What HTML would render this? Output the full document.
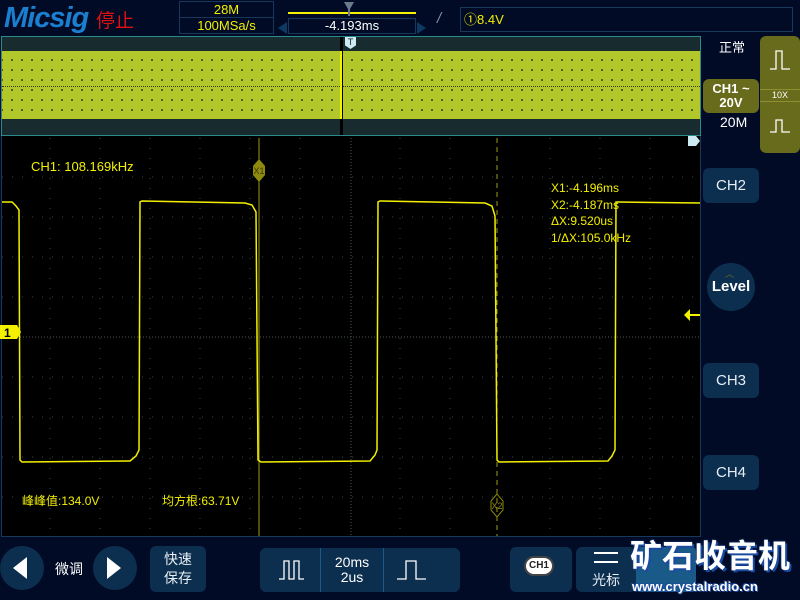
<!DOCTYPE html>
<html><head><meta charset="utf-8"><style>
*{margin:0;padding:0;box-sizing:border-box}
html,body{width:800px;height:600px;overflow:hidden}
body{background:#010b26;position:relative;font-family:"Liberation Sans","Noto Sans CJK SC",sans-serif;color:#fff}
.a{position:absolute;white-space:nowrap}
.btn{position:absolute;background:#0c2f4f;border-radius:6px;color:#e8eef4;display:flex;align-items:center;justify-content:center;text-align:center}
.y{color:#f3f000}
</style></head><body>
<div class="a" style="left:4px;top:2px;font:italic bold 29px 'Liberation Sans',sans-serif;color:#1b7fd0;letter-spacing:-1px">Micsig</div>
<div class="a" style="left:96px;top:6px;font-size:19px;color:#e01010">停止</div>
<div class="a" style="left:179px;top:1px;width:95px;height:33px;border:1px solid #17385a"></div>
<div class="a" style="left:179px;top:17px;width:95px;height:1px;background:#17385a"></div>
<div class="a y" style="left:179px;top:2px;width:95px;text-align:center;font-size:13px">28M</div>
<div class="a y" style="left:179px;top:18px;width:95px;text-align:center;font-size:13px">100MSa/s</div>
<div class="a" style="left:288px;top:12px;width:128px;height:2px;background:#f3f000"></div>
<div class="a" style="left:344px;top:2px;width:10px;height:14px;background:#6b7a88;clip-path:polygon(0 0,100% 0,60% 50%,60% 100%,40% 100%,40% 50%)"></div>
<div class="a" style="left:278px;top:22px;width:0;height:0;border-right:9px solid #0d3a63;border-top:6px solid transparent;border-bottom:6px solid transparent"></div>
<div class="a" style="left:288px;top:18px;width:128px;height:16px;border:1px solid #17385a;font-size:13px;text-align:center;line-height:14px">-4.193ms</div>
<div class="a" style="left:417px;top:22px;width:0;height:0;border-left:9px solid #0d3a63;border-top:6px solid transparent;border-bottom:6px solid transparent"></div>
<div class="a" style="left:437px;top:10px;font-size:15px;color:#8a93a0;font-style:italic">/</div>
<div class="a" style="left:460px;top:7px;width:333px;height:25px;border:1px solid #17385a;padding-left:3px;font-size:13px;line-height:23px" ><span class="y">①8.4V</span></div>
<div class="a" style="left:1px;top:36px;width:700px;height:100px;background:#182c30;border:1px solid #2b8a8a"></div>
<div class="a" style="left:2px;top:51px;width:698px;height:68px;background:#b2c82a;background-image:radial-gradient(#3a3a10 0.8px,transparent 1px);background-size:10px 10px;background-position:5px 4px"></div>
<div class="a" style="left:2px;top:86px;width:698px;height:0;border-top:1px dotted #3a3a10"></div>
<div class="a" style="left:340px;top:37px;width:3px;height:98px;background:#000"></div>
<div class="a" style="left:340px;top:51px;width:2px;height:68px;background:#f3f000"></div>
<div class="a" style="left:345px;top:37px;width:11px;height:12px;background:#cdeaf2;color:#123;font-size:9px;text-align:center;line-height:10px;clip-path:polygon(0 0,100% 0,100% 70%,50% 100%,0 70%)">T</div>
<div class="a" style="left:1px;top:136px;width:700px;height:401px;background:#000;border:1px solid #17385a;border-top:none"></div>
<svg class="a" style="left:0;top:0" width="800" height="600">
<g stroke="#3a4a4a" stroke-width="1" stroke-dasharray="1 9">
<line x1="50" y1="138" x2="50" y2="536"/><line x1="100" y1="138" x2="100" y2="536"/><line x1="150" y1="138" x2="150" y2="536"/><line x1="200" y1="138" x2="200" y2="536"/><line x1="250" y1="138" x2="250" y2="536"/><line x1="300" y1="138" x2="300" y2="536"/><line x1="400" y1="138" x2="400" y2="536"/><line x1="450" y1="138" x2="450" y2="536"/><line x1="550" y1="138" x2="550" y2="536"/><line x1="600" y1="138" x2="600" y2="536"/><line x1="650" y1="138" x2="650" y2="536"/>
<line x1="2" y1="177" x2="700" y2="177"/><line x1="2" y1="217" x2="700" y2="217"/><line x1="2" y1="257" x2="700" y2="257"/><line x1="2" y1="297" x2="700" y2="297"/><line x1="2" y1="377" x2="700" y2="377"/><line x1="2" y1="417" x2="700" y2="417"/><line x1="2" y1="457" x2="700" y2="457"/><line x1="2" y1="497" x2="700" y2="497"/>
</g>
<g stroke="#4a5a5a" stroke-dasharray="1 2">
<line x1="351" y1="138" x2="351" y2="536"/><line x1="2" y1="337" x2="700" y2="337"/>
</g>
<line x1="259" y1="138" x2="259" y2="536" stroke="#9c9a14" stroke-width="1"/>
<line x1="497" y1="138" x2="497" y2="536" stroke="#9c9a14" stroke-dasharray="5 4"/>
<polyline fill="none" stroke="#f3f000" stroke-width="1.5" points="2,202 12,202 16,206 19,210 20,460 22,462 130,461 136,456 139,450 140,202 142,201 245,203 252,205 256,212 258,460 261,462 370,461 375,455 377,450 378,202 380,201 485,203 492,206 495,216 497,460 499,462 608,461 612,456 615,450 616,202 618,202 700,203"/>
<polygon points="253,166 259,159 265,166 265,175 259,182 253,175" fill="#8e8a10"/>
<text x="259" y="174" font-size="9" fill="#3a3a00" text-anchor="middle" font-family="Liberation Sans">X1</text>
<polygon points="491,501 497,494 503,501 503,510 497,517 491,510" fill="none" stroke="#8e8a10"/>
<text x="497" y="509" font-size="9" fill="#8e8a10" text-anchor="middle" font-family="Liberation Sans">X2</text>
<polygon points="0,325 17,325 21,332 17,339 0,339" fill="#f3f000"/>
<text x="4" y="337" font-size="12" font-weight="bold" fill="#000" font-family="Liberation Sans">1</text>
<polygon points="684,315 690,309 690,314 700,314 700,316 690,316 690,321" fill="#f3f000"/>
<polygon points="688,136 696,136 700,141 696,146 688,146" fill="#cdeaf2"/>
</svg>
<div class="a y" style="left:31px;top:159px;font-size:13px">CH1: 108.169kHz</div>
<div class="a y" style="left:551px;top:180px;font-size:12px;line-height:16.5px">X1:-4.196ms<br>X2:-4.187ms<br>ΔX:9.520us<br>1/ΔX:105.0kHz</div>
<div class="a y" style="left:22px;top:492px;font-size:12px">峰峰值:134.0V</div>
<div class="a y" style="left:162px;top:492px;font-size:12px">均方根:63.71V</div>
<div class="a" style="left:719px;top:37px;font-size:13px">正常</div>
<div class="a" style="left:760px;top:36px;width:40px;height:117px;background:#686a1c;border-radius:6px"></div>
<div class="a" style="left:760px;top:89px;width:40px;height:13px;border-top:1px solid #8e9030;border-bottom:1px solid #8e9030;font-size:9px;text-align:center;line-height:11px">10X</div>
<svg class="a" style="left:768px;top:48px" width="24" height="24"><polyline points="2,21 8,21 8,3 14,3 14,21 22,21" fill="none" stroke="#fff" stroke-width="1.3"/></svg>
<svg class="a" style="left:768px;top:115px" width="24" height="20"><polyline points="2,17 8,17 8,5 14,5 14,17 22,17" fill="none" stroke="#fff" stroke-width="1.3"/></svg>
<div class="a" style="left:703px;top:79px;width:56px;height:34px;background:#686a1c;border-radius:6px;font-size:13px;font-weight:bold;text-align:center;line-height:14px;padding-top:3px">CH1 ~<br>20V</div>
<div class="a" style="left:720px;top:114px;font-size:14px">20M</div>
<div class="btn" style="left:703px;top:168px;width:56px;height:35px;font-size:15px">CH2</div>
<div class="a" style="left:707px;top:263px;width:48px;height:48px;border-radius:50%;background:#0c2f4f;font-size:15px;font-weight:bold;text-align:center;line-height:48px">Level</div>
<div class="a" style="left:725px;top:267px;color:#686a1c;font-size:9px">︿</div>
<div class="btn" style="left:703px;top:363px;width:56px;height:35px;font-size:15px">CH3</div>
<div class="btn" style="left:703px;top:455px;width:56px;height:35px;font-size:15px">CH4</div>
<div class="a" style="left:0;top:546px;width:44px;height:44px;border-radius:50%;background:#0c2f4f"></div>
<div class="a" style="left:13px;top:557px;border-right:14px solid #fff;border-top:11px solid transparent;border-bottom:11px solid transparent"></div>
<div class="a" style="left:55px;top:559px;font-size:14px">微调</div>
<div class="a" style="left:93px;top:546px;width:44px;height:44px;border-radius:50%;background:#0c2f4f"></div>
<div class="a" style="left:107px;top:557px;border-left:14px solid #fff;border-top:11px solid transparent;border-bottom:11px solid transparent"></div>
<div class="btn" style="left:150px;top:546px;width:56px;height:46px;font-size:14px;line-height:19px">快速<br>保存</div>
<div class="btn" style="left:260px;top:548px;width:200px;height:44px"></div>
<div class="a" style="left:320px;top:548px;width:1px;height:44px;background:#1a5a8a"></div>
<div class="a" style="left:383px;top:548px;width:1px;height:44px;background:#1a5a8a"></div>
<svg class="a" style="left:270px;top:556px" width="44" height="28"><polyline points="9,23 14,23 14,5 19,5 19,23 24,23 24,5 29,5 29,23 34,23" fill="none" stroke="#fff" stroke-width="1.3"/></svg>
<svg class="a" style="left:390px;top:556px" width="44" height="28"><polyline points="7,23 16,23 16,5 26,5 26,23 36,23" fill="none" stroke="#fff" stroke-width="1.3"/></svg>
<div class="a" style="left:321px;top:555px;width:62px;text-align:center;font-size:14px;line-height:15px">20ms<br>2us</div>
<div class="btn" style="left:510px;top:547px;width:62px;height:45px"></div>
<div class="a" style="left:524px;top:556px;width:30px;height:20px;border-radius:10px;background:#fff;border:2px solid #444;color:#222;font-size:10px;text-align:center;line-height:16px;font-weight:bold">CH1</div>
<div class="btn" style="left:576px;top:547px;width:60px;height:45px;font-size:14px;padding-top:20px">光标</div>
<div class="a" style="left:594px;top:552px;width:24px;height:2px;background:#fff"></div>
<div class="a" style="left:594px;top:561px;width:24px;height:2px;background:#fff"></div>
<div class="a" style="left:636px;top:547px;width:60px;height:45px;background:#1a5a88;border-radius:4px"></div>
<div class="a" style="left:630px;top:536px;font-size:32px;line-height:40px;font-weight:bold;color:#fff;letter-spacing:0;text-shadow:0 0 2px #1a4aa0,2px 2px 0 #1a4aa0">矿石收音机</div>
<div class="a" style="left:632px;top:578px;font-size:13px;line-height:18px;font-weight:bold;color:#fff;text-shadow:1px 1px 0 #1a4aa0,-1px -1px 0 #1a4aa0">www.crystalradio.cn</div>
</body></html>
